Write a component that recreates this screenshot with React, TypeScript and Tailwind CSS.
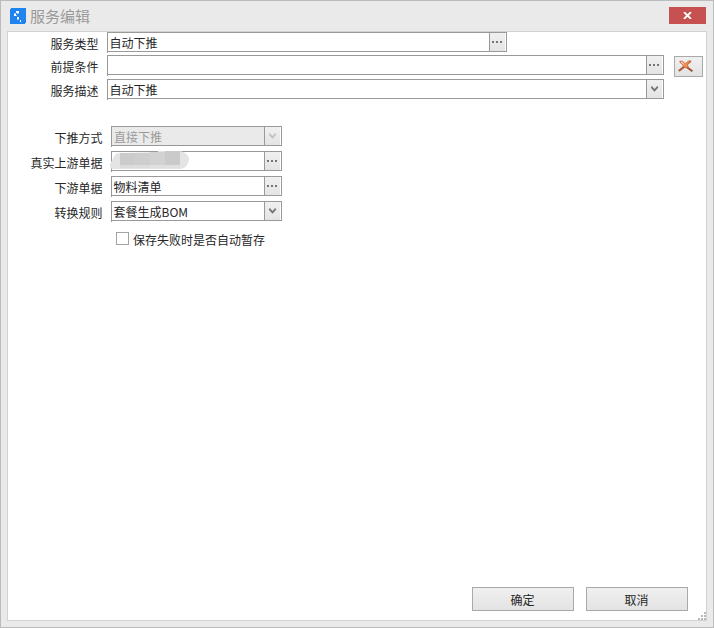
import React from 'react';
import clsx from 'clsx';

type FieldKind = 'lookup' | 'select';

interface FieldProps {
  value?: string;
  kind: FieldKind;
  width: string;
  disabled?: boolean;
  children?: React.ReactNode;
}

function Dots() {
  return (
    <svg width="10" height="2" viewBox="0 0 10 2" shapeRendering="crispEdges" fill="#747474">
      <rect x="0" y="0" width="2" height="2" />
      <rect x="4" y="0" width="2" height="2" />
      <rect x="8" y="0" width="2" height="2" />
    </svg>
  );
}

function Chevron({ disabled }: { disabled?: boolean }) {
  return (
    <svg width="8" height="6" viewBox="0 0 8 6" fill="none" stroke={disabled ? '#c3c3c3' : '#747474'}>
      <path d="M0.8 0.6V1.4L3.5 4.4L6.2 1.4V0.6" strokeWidth="1.9" />
    </svg>
  );
}

function Field({ value, kind, width, disabled, children }: FieldProps) {
  return (
    <div className={clsx('relative flex h-5 shrink-0 border border-[#999]', width, disabled ? 'bg-[#eaeaea]' : 'bg-white')}>
      {/* left edge runs slightly past the box */}
      <span className="absolute -left-px -bottom-0.5 w-px h-1 bg-[#999]" />
      <span className={clsx('flex-1 pt-px leading-[18px] whitespace-nowrap', disabled ? 'pl-[2px] text-[#9b9b9b]' : 'pl-[1.5px]')}>
        {value}
      </span>
      {children}
      <div className="w-[17px] border-l border-l-[#999] border-r border-r-white bg-gradient-to-b from-[#f0f0f0] to-[#e4e4e4]">
        <div className={clsx('flex', kind === 'lookup' ? 'pt-2 pl-[2px]' : 'pt-[6px] pl-1')}>
          {kind === 'lookup' ? <Dots /> : <Chevron disabled={disabled} />}
        </div>
      </div>
    </div>
  );
}

function Label({ text, width }: { text: string; width: string }) {
  return <label className={clsx('shrink-0 pt-[3px] pr-[0.5px] text-right leading-[18px] whitespace-nowrap', width)}>{text}</label>;
}

function AppIcon() {
  return (
    <svg width="16" height="16" viewBox="0 0 16 16" shapeRendering="crispEdges">
      <rect width="16" height="16" rx="2" fill="#2084f0" />
      <g fill="#fff">
        <rect x="6" y="3" width="3" height="2" />
        <rect x="4" y="6" width="2" height="2" />
        <rect x="7" y="9" width="2" height="2" />
        <rect x="10" y="12" width="1" height="2" />
      </g>
      <g fill="#9accff">
        <rect x="7" y="5" width="2" height="1" />
        <rect x="4" y="5" width="2" height="1" />
        <rect x="6" y="7" width="1" height="1" />
        <rect x="7" y="11" width="2" height="1" />
      </g>
    </svg>
  );
}

function DeleteIcon() {
  return (
    <svg width="15" height="12" viewBox="0 0 15 12">
      <path d="M12.8 1L9 4L5 7.6L0.8 11" fill="none" stroke="#b05a38" strokeWidth="2.2" />
      <path d="M2.2 1.8L6 4.8L10 8L14.4 11.2" fill="none" stroke="#a8482c" strokeWidth="2" />
      <path d="M1.6 1.2H4.4L7.4 3.6L10.4 1H12.6L9.4 5L10.4 7L8 8L5.4 6.8L5 5Z" fill="#ee8a4c" stroke="#bd5f3a" strokeWidth="0.6" />
      <path d="M2.8 2L6.2 4.6" stroke="#ffcfae" strokeWidth="1.2" />
    </svg>
  );
}

// Blurred-out document name
function Mosaic() {
  return (
    <svg className="absolute -left-[2px] -top-px" width="80" height="19" viewBox="0 0 80 19">
      <path d="M0 13L5 4Q6 2 10 2L48 1V0H70Q79 2 79 9Q78 16 71 18H2Q0 17 0 15Z" fill="#e4e4e4" />
      <g shapeRendering="crispEdges">
        <rect x="10" y="2" width="15" height="12" fill="#cbcbcb" />
        <rect x="25" y="2" width="15" height="12" fill="#cecece" />
        <rect x="40" y="1" width="15" height="13" fill="#d2d2d2" />
        <rect x="55" y="0" width="15" height="14" fill="#cacaca" />
        <rect x="10" y="14" width="30" height="3" fill="#dcdcdc" />
        <rect x="40" y="14" width="30" height="3" fill="#e0e0e0" />
      </g>
    </svg>
  );
}

function DialogButton({ text }: { text: string }) {
  return (
    <button className="flex h-6 w-[102px] justify-center border border-[#a9a9a9] bg-gradient-to-b from-[#f0f0f0] to-[#e3e3e3] pt-[3px] pr-px leading-[18px]">
      {text}
    </button>
  );
}

export default function App() {
  return (
    <div className="flex h-[628px] w-[714px] flex-col border border-[#bcbcbc] bg-[#eaeaea] px-1.5 pb-1.5 font-['Noto_Sans_CJK_SC','Liberation_Sans',sans-serif] text-[12px] text-[#262626] select-none">
      {/* Title bar */}
      <div className="flex h-[30px] shrink-0 items-start pl-[3px]">
        <span className="mt-[7px]">
          <AppIcon />
        </span>
        <span className="ml-[4px] mt-[5px] text-[15px] leading-5 text-[#999]">服务编辑</span>
        <button className="mt-1.5 mr-px ml-auto flex h-[17px] w-[37px] items-center justify-center bg-[#c75050]">
          <svg width="9" height="7" viewBox="0 0 9 7">
            <path d="M1 0L8 7M8 0L1 7" stroke="#fff" strokeWidth="1.8" />
          </svg>
        </button>
      </div>

      <div className="relative flex flex-1 flex-col border border-[#d2d2d2] bg-white">
        {/* Service settings */}
        <div className="flex flex-col gap-1">
          <div className="flex h-[19px] gap-2">
            <Label text="服务类型" width="w-[91px]" />
            <Field value="自动下推" kind="lookup" width="w-[400px]" />
          </div>
          <div className="flex h-5 gap-2">
            <Label text="前提条件" width="w-[91px]" />
            <Field kind="lookup" width="w-[557px]" />
            <button className="mt-px ml-[2px] flex h-[21px] w-[29px] shrink-0 border border-[#a9a9a9] bg-gradient-to-b from-[#f0f0f0] to-[#e3e3e3] pt-[3px] pl-[3px]">
              <DeleteIcon />
            </button>
          </div>
          <div className="flex h-5 gap-2">
            <Label text="服务描述" width="w-[91px]" />
            <Field value="自动下推" kind="select" width="w-[557px]" />
          </div>
        </div>

        {/* Push-down settings */}
        <div className="mt-[27px] flex flex-col gap-[5px]">
          <div className="flex h-5 gap-2">
            <Label text="下推方式" width="w-[95px]" />
            <Field value="直接下推" kind="select" width="w-[171px]" disabled />
          </div>
          <div className="flex h-5 gap-2">
            <Label text="真实上游单据" width="w-[95px]" />
            <Field kind="lookup" width="w-[171px]">
              <Mosaic />
            </Field>
          </div>
          <div className="flex h-5 gap-2">
            <Label text="下游单据" width="w-[95px]" />
            <Field value="物料清单" kind="lookup" width="w-[171px]" />
          </div>
          <div className="flex h-5 gap-2">
            <Label text="转换规则" width="w-[95px]" />
            <Field value="套餐生成BOM" kind="select" width="w-[171px]" />
          </div>
        </div>
        <label className="mt-[10px] ml-[108px] flex items-start gap-1">
          <span className="mt-px h-[13px] w-[13px] border border-[#a3a3a3] bg-white" />
          <span className="leading-[18px]">保存失败时是否自动暂存</span>
        </label>

        <div className="mt-auto mb-[9px] flex justify-end gap-3 pr-[18px]">
          <DialogButton text="确定" />
          <DialogButton text="取消" />
        </div>

        {/* Resize grip */}
        <svg className="absolute right-0 bottom-0" width="8" height="8" viewBox="0 0 8 8" shapeRendering="crispEdges" fill="#b8b8b8">
          <rect x="6" y="0" width="2" height="2" />
          <rect x="3" y="3" width="2" height="2" />
          <rect x="6" y="3" width="2" height="2" />
          <rect x="0" y="6" width="2" height="2" />
          <rect x="3" y="6" width="2" height="2" />
          <rect x="6" y="6" width="2" height="2" />
        </svg>
      </div>
    </div>
  );
}
